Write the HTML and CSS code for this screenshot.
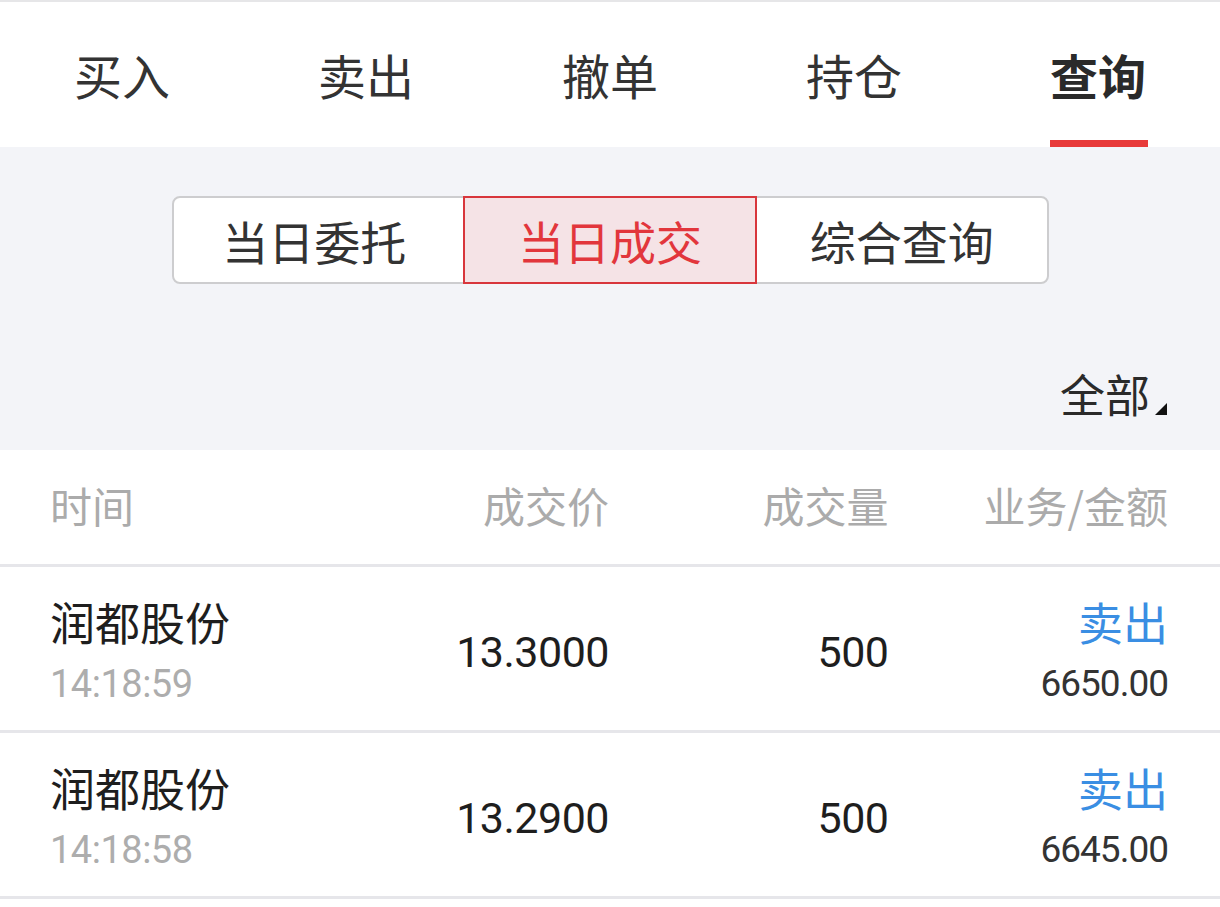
FILE: index.html
```html
<!DOCTYPE html>
<html lang="zh-CN">
<head>
<meta charset="utf-8">
<title>查询</title>
<link rel="stylesheet" href="styles.css">
</head>
<body>
<div class="page">
  <nav class="tabs">
    <div class="tab">买入</div>
    <div class="tab">卖出</div>
    <div class="tab">撤单</div>
    <div class="tab">持仓</div>
    <div class="tab active"><span class="tab-label">查询</span></div>
  </nav>
  <section class="filter">
    <div class="segments">
      <div class="seg first">当日委托</div>
      <div class="seg active">当日成交</div>
      <div class="seg">综合查询</div>
    </div>
    <div class="scope">
      <span class="scope-text">全部</span><span class="scope-arrow"></span>
    </div>
  </section>
  <section class="list">
    <div class="row head">
      <div class="cell left">时间</div>
      <div class="cell">成交价</div>
      <div class="cell">成交量</div>
      <div class="cell">业务/金额</div>
    </div>
    <div class="row item">
      <div class="cell left stack">
        <span class="name">润都股份</span>
        <span class="time">14:18:59</span>
      </div>
      <div class="cell num">13.3000</div>
      <div class="cell num">500</div>
      <div class="cell stack">
        <span class="biz">卖出</span>
        <span class="amt">6650.00</span>
      </div>
    </div>
    <div class="row item">
      <div class="cell left stack">
        <span class="name">润都股份</span>
        <span class="time">14:18:58</span>
      </div>
      <div class="cell num">13.2900</div>
      <div class="cell num">500</div>
      <div class="cell stack">
        <span class="biz">卖出</span>
        <span class="amt">6645.00</span>
      </div>
    </div>
  </section>
</div>
</body>
</html>
```

FILE: styles.css
```css
* { box-sizing: border-box; }
html, body { margin: 0; padding: 0; }
body {
  width: 1220px;
  height: 907px;
  overflow: hidden;
  background: #ffffff;
  font-family: "Noto Sans CJK SC", "Noto Sans", sans-serif;
  color: #222;
}
.page { display: flex; flex-direction: column; }

.tabs {
  display: flex;
  height: 147px;
  border-top: 2px solid #e6e6e8;
  background: #fff;
}
.tab {
  flex: 1;
  display: flex;
  align-items: center;
  justify-content: center;
  font-size: 48px;
  color: #333;
  padding-bottom: 2px;
  position: relative;
}
.tab.active {
  font-weight: 700;
  color: #2a2a2a;
}
.tab-label { position: relative; display: inline-block; }
.tab.active::after {
  content: "";
  position: absolute;
  left: 50%;
  bottom: 0;
  width: 98px;
  margin-left: -48px;
  height: 7px;
  background: #e83a3a;
}

.filter {
  background: #f3f4f8;
  height: 303px;
  display: flex;
  flex-direction: column;
  align-items: center;
  padding-top: 49px;
}
.segments {
  display: flex;
  width: 877px;
  height: 88px;
  border: 2px solid #cdcdcf;
  border-radius: 8px;
  background: #fff;
}
.seg {
  flex: 1;
  display: flex;
  align-items: center;
  justify-content: center;
  font-size: 46px;
  color: #333;
}
.seg.first { text-indent: -8px; }
.seg.active {
  margin: -2px 0;
  border: 2px solid #d8363c;
  background: #f5e3e6;
  color: #e2363c;
}
.scope {
  align-self: flex-end;
  margin-right: 53px;
  margin-top: 82px;
  display: flex;
  align-items: flex-end;
}
.scope-text {
  font-size: 45px;
  line-height: 56px;
  color: #2a2a2a;
}
.scope-arrow {
  width: 0;
  height: 0;
  border-left: 12px solid transparent;
  border-bottom: 12px solid #111;
  margin-left: 5px;
  margin-bottom: 7px;
}

.list { background: #fff; }
.row {
  display: grid;
  grid-template-columns: repeat(4, 1fr);
  padding: 0 52px 0 50px;
  border-bottom: 3px solid #e6e6ea;
  align-items: center;
}
.cell { text-align: right; }
.cell.left { text-align: left; }
.head {
  height: 117px;
  color: #ababab;
  font-size: 42px;
  padding-bottom: 6px;
}
.item {
  height: 166px;
  align-items: start;
}
.stack {
  display: flex;
  flex-direction: column;
  padding-top: 26px;
}
.cell.stack { align-items: flex-end; }
.cell.left.stack { align-items: flex-start; }
.name, .biz {
  font-size: 45px;
  line-height: 58px;
}
.name { color: #1e1e1e; }
.biz { color: #3a8ee3; }
.time, .amt {
  font-family: Roboto, "Noto Sans", sans-serif;
  line-height: 58px;
  margin-top: 4px;
}
.time {
  font-size: 38px;
  color: #adadad;
  letter-spacing: -0.5px;
}
.amt {
  font-size: 37px;
  color: #333;
  letter-spacing: -1px;
}
.num {
  align-self: center;
  font-family: Roboto, "Noto Sans", sans-serif;
  font-size: 43px;
  color: #1e1e1e;
  letter-spacing: -0.5px;
  padding-top: 6px;
}
```
